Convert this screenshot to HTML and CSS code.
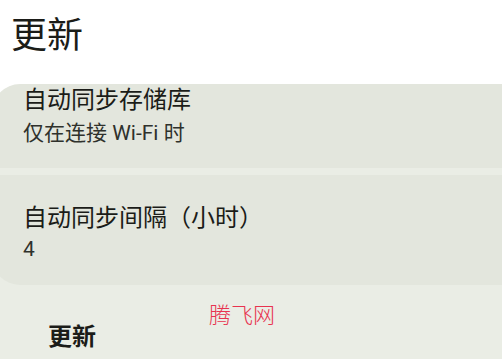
FILE: index.html
```html
<!DOCTYPE html>
<html lang="zh-CN">
<head>
<meta charset="utf-8">
<link rel="stylesheet" href="styles.css">
</head>
<body>
<div class="screen">
  <header class="appbar"><h1 class="appbar-title">更新</h1></header>
  <div class="prefs">
    <div class="card-wrap top-wrap">
      <div class="card card-top">
        <div class="pref-title">自动同步存储库</div>
        <div class="pref-summary">仅在连接 Wi-Fi 时</div>
      </div>
    </div>
    <div class="card card-bottom">
      <div class="pref-title">自动同步间隔（小时）</div>
      <div class="pref-summary">4</div>
    </div>
    <div class="category">更新</div>
  </div>
  <div class="watermark">腾飞网</div>
</div>
</body>
</html>
```

FILE: styles.css
```css
html, body {
  margin: 0;
  padding: 0;
  background: #ffffff;
}
body {
  font-family: Roboto, "Noto Sans CJK SC", sans-serif;
  color: #1b1c18;
  overflow: hidden;
}
.screen {
  position: relative;
  width: 502px;
  height: 359px;
  overflow: hidden;
}
.appbar {
  height: 84px;
  box-sizing: border-box;
  padding: 16px 0 0 11px;
}
.appbar-title {
  margin: 0;
  font-size: 36px;
  line-height: 40px;
  font-weight: 400;
}
.prefs {
  background: #eaede5;
  height: 275px;
}
.top-wrap {
  background: #ffffff;
}
.card {
  background: #e3e6dd;
  margin-left: -8px;
  margin-right: -10px;
  padding-left: 31px;
  box-sizing: border-box;
}
.card-top {
  height: 84px;
  border-top-left-radius: 28px;
  padding-top: 2px;
}
.card-wrap {
  border-bottom: 7px solid #eaede5;
}
.card-bottom {
  height: 110px;
  border-bottom-left-radius: 28px;
  padding-top: 29px;
}
.pref-title {
  font-size: 24px;
  line-height: 28px;
  color: #1b1c18;
}
.pref-summary {
  font-size: 21px;
  line-height: 28px;
  color: #2f312c;
  margin-top: 5px;
}
.card-bottom .pref-summary {
  margin-top: 3px;
}
.category {
  padding: 38px 0 0 48px;
  font-size: 24px;
  line-height: 28px;
  font-weight: 700;
  color: #1b1c18;
}
.watermark {
  position: absolute;
  left: 209px;
  top: 299px;
  font-size: 22px;
  line-height: 28px;
  color: #e8334f;
  font-family: "Noto Sans CJK SC", sans-serif;
  font-weight: 300;
}
```
